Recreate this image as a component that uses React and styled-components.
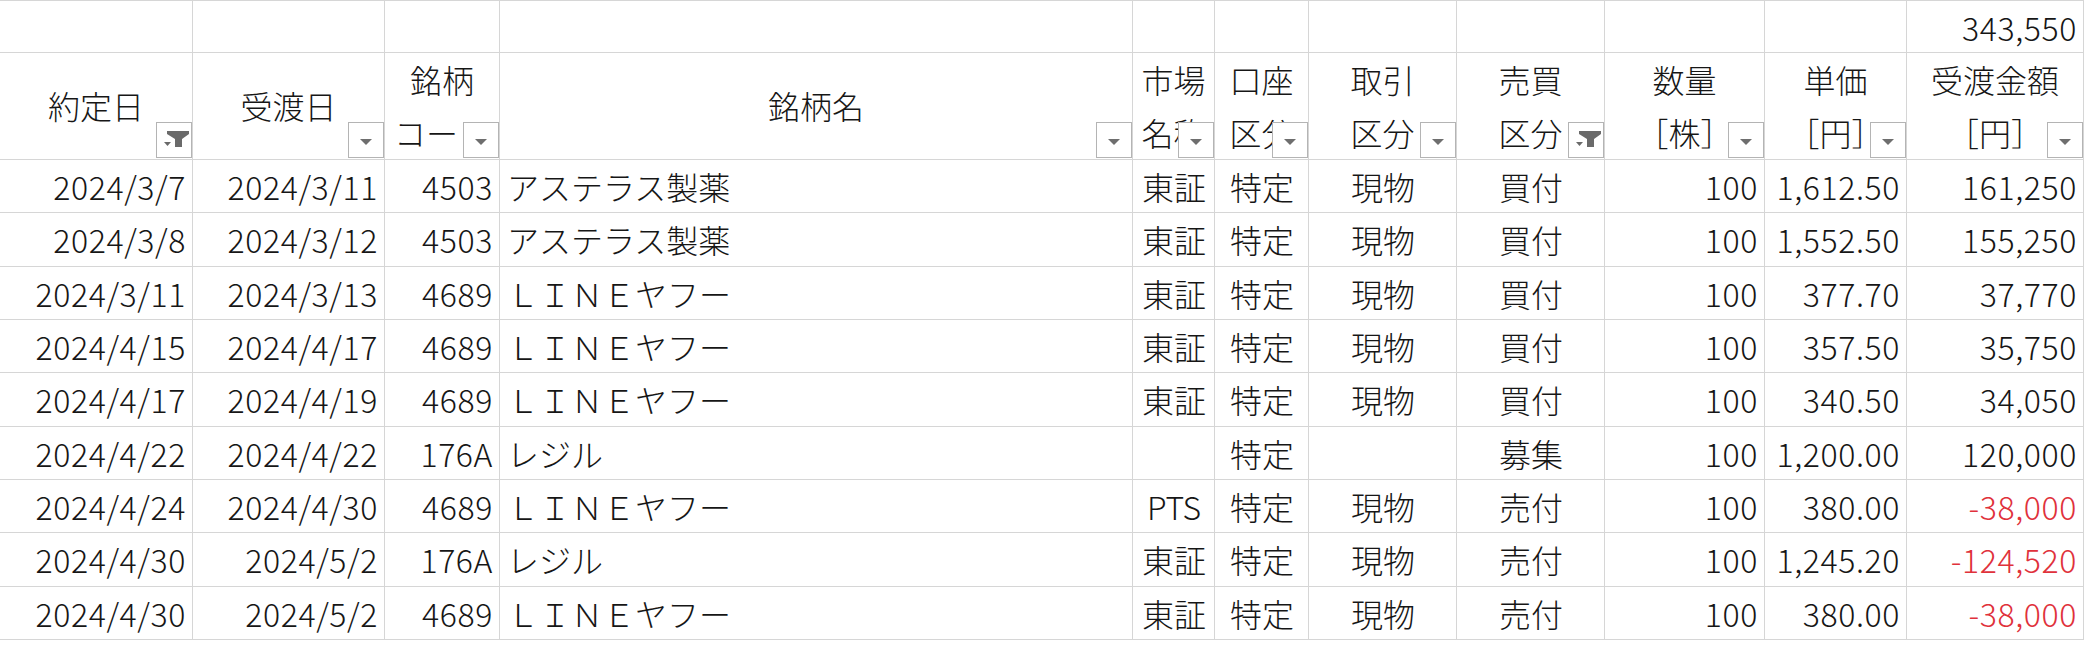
import styled, { createGlobalStyle } from 'styled-components';

const GlobalStyle = createGlobalStyle`
  html, body {
    margin: 0;
    padding: 0;
    background: #ffffff;
  }
`;

const GRID = '#d6d6d6';

const columns = [
  { w: 193, align: 'flex-end', head: ['約定日'], filtered: true },
  { w: 192, align: 'flex-end', head: ['受渡日'] },
  { w: 115, align: 'flex-end', head: ['銘柄', 'コード'] },
  { w: 633, align: 'flex-start', head: ['銘柄名'] },
  { w: 82, align: 'center', head: ['市場', '名称'] },
  { w: 94, align: 'center', head: ['口座', '区分'] },
  { w: 148, align: 'center', head: ['取引', '区分'] },
  { w: 148, align: 'center', head: ['売買', '区分'], filtered: true },
  { w: 160, align: 'flex-end', head: ['数量', '［株］'] },
  { w: 142, align: 'flex-end', head: ['単価', '［円］'] },
  { w: 177, align: 'flex-end', head: ['受渡金額', '［円］'] },
];

const rows = [
  ['2024/3/7', '2024/3/11', '4503', 'アステラス製薬', '東証', '特定', '現物', '買付', '100', '1,612.50', '161,250'],
  ['2024/3/8', '2024/3/12', '4503', 'アステラス製薬', '東証', '特定', '現物', '買付', '100', '1,552.50', '155,250'],
  ['2024/3/11', '2024/3/13', '4689', 'ＬＩＮＥヤフー', '東証', '特定', '現物', '買付', '100', '377.70', '37,770'],
  ['2024/4/15', '2024/4/17', '4689', 'ＬＩＮＥヤフー', '東証', '特定', '現物', '買付', '100', '357.50', '35,750'],
  ['2024/4/17', '2024/4/19', '4689', 'ＬＩＮＥヤフー', '東証', '特定', '現物', '買付', '100', '340.50', '34,050'],
  ['2024/4/22', '2024/4/22', '176A', 'レジル', '', '特定', '', '募集', '100', '1,200.00', '120,000'],
  ['2024/4/24', '2024/4/30', '4689', 'ＬＩＮＥヤフー', 'PTS', '特定', '現物', '売付', '100', '380.00', '-38,000'],
  ['2024/4/30', '2024/5/2', '176A', 'レジル', '東証', '特定', '現物', '売付', '100', '1,245.20', '-124,520'],
  ['2024/4/30', '2024/5/2', '4689', 'ＬＩＮＥヤフー', '東証', '特定', '現物', '売付', '100', '380.00', '-38,000'],
];

const Sheet = styled.div`
  display: grid;
  grid-template-columns: ${columns.map((c) => `${c.w}px`).join(' ')};
  grid-template-rows: 53.333px 106.667px;
  grid-auto-rows: 53.333px;
  width: 2084px;
  font-family: "Noto Sans CJK JP", "Noto Sans", sans-serif;
  font-weight: 300;
  font-size: 32px;
  color: #161616;
`;

const Cell = styled.div`
  box-sizing: border-box;
  display: flex;
  align-items: center;
  justify-content: ${(p) => p.$align};
  padding: 0 6px 0 7px;
  border-right: 1px solid ${GRID};
  border-bottom: 1px solid ${GRID};
  white-space: nowrap;
  overflow: hidden;
  letter-spacing: ${(p) => (p.$numeric ? '0.6px' : '0')};
  color: ${(p) => (p.$negative ? '#e0313b' : 'inherit')};
`;

const TopCell = styled(Cell)`
  border-top: 1px solid ${GRID};
`;

const HeaderCell = styled.div`
  position: relative;
  box-sizing: border-box;
  display: flex;
  flex-direction: column;
  align-items: center;
  justify-content: center;
  border-right: 1px solid ${GRID};
  border-bottom: 1px solid ${GRID};
  line-height: 53.333px;
  white-space: nowrap;
  overflow: hidden;
`;

const HeadLine = styled.span`
  display: block;
  height: 53.333px;
`;

const FilterButton = styled.div`
  position: absolute;
  right: 0;
  bottom: 1px;
  width: 36px;
  height: 36px;
  box-sizing: border-box;
  background: #ffffff;
  border: 1px solid #b4b4b4;
  display: flex;
  align-items: center;
  justify-content: center;

  svg {
    display: block;
  }
`;

const DropArrow = () => (
  <svg width="34" height="34" viewBox="0 0 34 34">
    <polygon points="11,16 23,16 17,22" fill="#6e6e6e" />
  </svg>
);

const FilterActive = () => (
  <svg width="34" height="34" viewBox="0 0 34 34">
    <polygon points="10,8 32,8 32,11 25,16 25,24 18,24 18,16 10,11" fill="#6a6a6a" />
    <polygon points="7,19 14,19 10.5,23" fill="#6a6a6a" />
  </svg>
);

const isNumeric = (v) => /^[-0-9,./A]+$/.test(v);

const App = () => {
  return (
    <>
      <GlobalStyle />
      <Sheet>
        {columns.map((c, i) => (
          <TopCell key={`top-${i}`} $align={c.align} $numeric>
            {i === columns.length - 1 ? '343,550' : ''}
          </TopCell>
        ))}
        {columns.map((c, i) => (
          <HeaderCell key={`head-${i}`}>
            {c.head.map((line) => (
              <HeadLine key={line}>{line}</HeadLine>
            ))}
            <FilterButton>{c.filtered ? <FilterActive /> : <DropArrow />}</FilterButton>
          </HeaderCell>
        ))}
        {rows.map((r, ri) =>
          r.map((v, ci) => (
            <Cell
              key={`${ri}-${ci}`}
              $align={columns[ci].align}
              $numeric={isNumeric(v)}
              $negative={v.startsWith('-')}
            >
              {v}
            </Cell>
          ))
        )}
      </Sheet>
    </>
  );
};

export default App;
